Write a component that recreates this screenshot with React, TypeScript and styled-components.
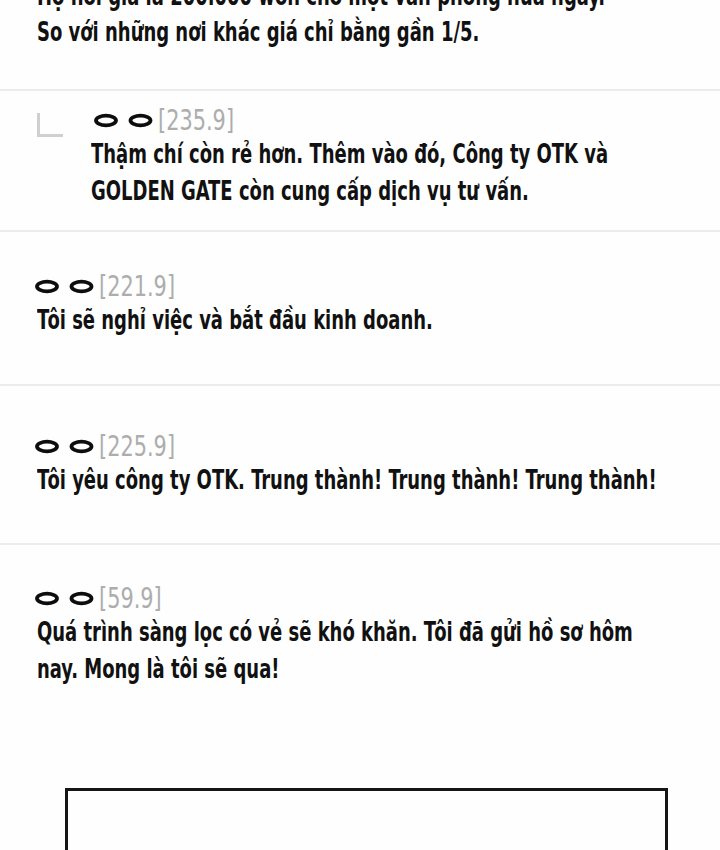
import React from "react";
import styled, { createGlobalStyle } from "styled-components";

const Global = createGlobalStyle`
  html, body {
    margin: 0;
    padding: 0;
    background: #fefefe;
    overflow: hidden;
  }
  body {
    font-family: "DejaVu Sans Condensed", "DejaVu Sans", sans-serif;
  }
`;

const Page = styled.div`
  width: 720px;
  height: 850px;
  overflow: hidden;
  background: #fefefe;
  display: flex;
  flex-direction: column;
`;

const Lead = styled.div`
  padding: 0 0 39px 37px;
  margin-top: -22px;
`;

const Text = styled.p`
  margin: 0;
  font-family: "DejaVu Sans Condensed", "DejaVu Sans", sans-serif;
  font-stretch: condensed;
  font-weight: 700;
  font-size: 27px;
  line-height: 36px;
  color: #111;
  white-space: nowrap;
  transform: scaleX(0.74);
  transform-origin: left center;
`;

const Section = styled.section<{ $top: number; $bottom: number }>`
  border-top: 2px solid #ececec;
  padding: ${(p) => p.$top}px 20px ${(p) => p.$bottom}px 37px;
  display: flex;
  align-items: flex-start;
`;

const Corner = styled.div`
  width: 23px;
  height: 21px;
  margin-top: 8px;
  margin-right: 28px;
  border-left: 3px solid #d0d0d0;
  border-bottom: 3px solid #d0d0d0;
  flex: none;
`;

const Body = styled.div`
  display: flex;
  flex-direction: column;
  gap: 1px;
`;

const Header = styled.div<{ $shift: number }>`
  display: flex;
  align-items: center;
  gap: 4px;
  height: 30px;
  margin-left: ${(p) => p.$shift}px;
`;

const Score = styled.span`
  font-family: "DejaVu Sans Condensed", "DejaVu Sans", sans-serif;
  font-stretch: condensed;
  font-weight: 400;
  font-size: 29px;
  line-height: 30px;
  color: #adadad;
  white-space: nowrap;
  transform: scaleX(0.8);
  transform-origin: left center;
`;

const Eyes = () => (
  <svg width="60" height="15" viewBox="0 0 60 15" aria-hidden="true">
    <ellipse cx="12" cy="7.5" rx="10" ry="4.8" fill="none" stroke="#0d0d0d" strokeWidth="3.8" />
    <ellipse cx="46.5" cy="7.5" rx="10" ry="4.8" fill="none" stroke="#0d0d0d" strokeWidth="3.8" />
  </svg>
);

const Frame = styled.div`
  margin: auto 0 0 65px;
  width: 597px;
  height: 59px;
  border: 3px solid #151515;
  border-bottom: none;
  flex: none;
`;

type Comment = {
  score: string;
  lines: string[];
  top: number;
  bottom: number;
  reply?: boolean;
};

const comments: Comment[] = [
  {
    score: "[235.9]",
    lines: [
      "Thậm chí còn rẻ hơn. Thêm vào đó, Công ty OTK và",
      "GOLDEN GATE còn cung cấp dịch vụ tư vấn.",
    ],
    top: 14,
    bottom: 21,
    reply: true,
  },
  { score: "[221.9]", lines: ["Tôi sẽ nghỉ việc và bắt đầu kinh doanh."], top: 39, bottom: 46 },
  {
    score: "[225.9]",
    lines: ["Tôi yêu công ty OTK. Trung thành! Trung thành! Trung thành!"],
    top: 45,
    bottom: 45,
  },
  {
    score: "[59.9]",
    lines: ["Quá trình sàng lọc có vẻ sẽ khó khăn. Tôi đã gửi hồ sơ hôm", "nay. Mong là tôi sẽ qua!"],
    top: 38,
    bottom: 0,
  },
];

export default function App() {
  return (
    <>
      <Global />
      <Page>
        <Lead>
          <Text>Họ nói giá là 200.000 won cho một văn phòng nửa ngày.</Text>
          <Text>So với những nơi khác giá chỉ bằng gần 1/5.</Text>
        </Lead>
        {comments.map((c, i) => (
          <Section key={i} $top={c.top} $bottom={c.bottom}>
            {c.reply && <Corner />}
            <Body>
              <Header $shift={c.reply ? 3 : -2}>
                <Eyes />
                <Score>{c.score}</Score>
              </Header>
              {c.lines.map((l, j) => (
                <Text key={j}>{l}</Text>
              ))}
            </Body>
          </Section>
        ))}
        <Frame />
      </Page>
    </>
  );
}
